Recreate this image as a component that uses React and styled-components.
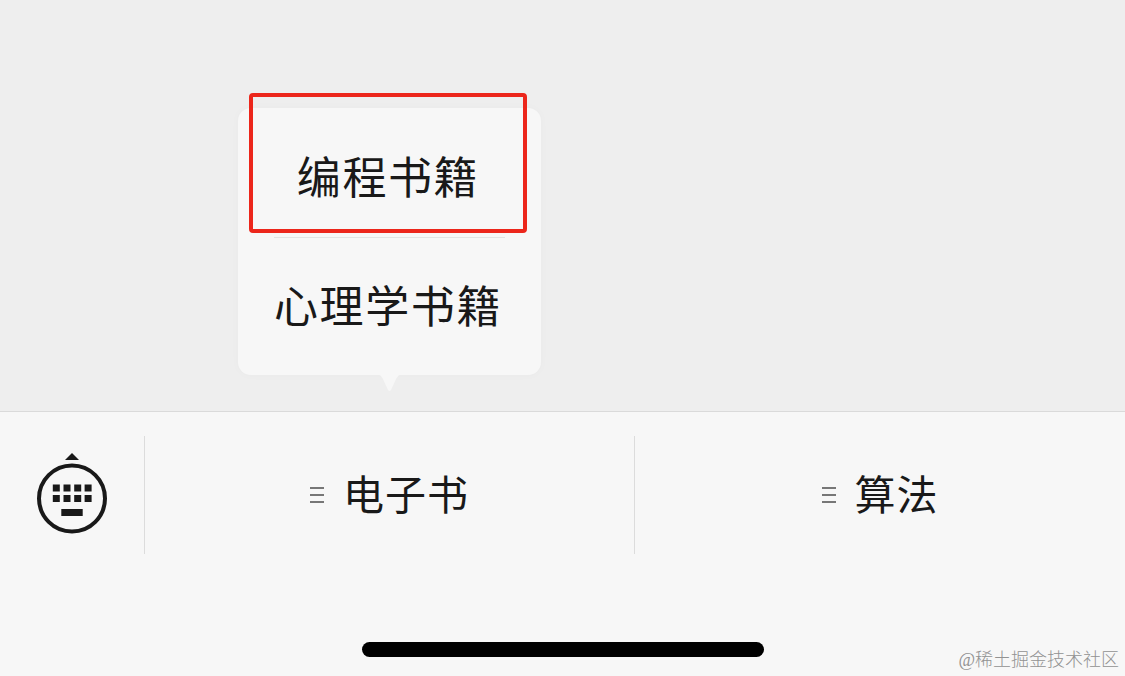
import React from 'react';
import styled, { createGlobalStyle } from 'styled-components';

const GlobalStyle = createGlobalStyle`
  * {
    box-sizing: border-box;
  }
  body {
    margin: 0;
    background: #f7f7f7;
    color: #191919;
    font-family: 'Noto Sans CJK SC', sans-serif;
  }
`;

const Page = styled.div`
  display: flex;
  flex-direction: column;
  position: relative;
  height: 676px;
  overflow: hidden;
`;

const ChatArea = styled.main`
  height: 412px;
  padding: 108px 0 0 238px;
  background: #eee;
  border-bottom: 1px solid #dadada;
`;

const Popover = styled.div`
  position: relative;
  width: 303px;
  height: 267px;
  padding-top: 2px;
  background: #f7f7f7;
  border-radius: 13px;
  box-shadow: 0 0 10px rgba(0, 0, 0, 0.025);
`;

const PopoverArrow = styled.svg`
  position: absolute;
  top: 266px;
  left: 140px;
`;

const PopoverItem = styled.div`
  display: flex;
  align-items: center;
  justify-content: center;
  height: 129px;
  padding-right: 3px;
  font-size: 44px;
  line-height: 1;
  letter-spacing: 1.6px;
  white-space: nowrap;
  & + & {
    position: relative;
  }
  & + &::before {
    content: '';
    position: absolute;
    top: -2px;
    left: 36px;
    width: 231px;
    height: 1px;
    background: #e2e4e3;
  }
`;

const Highlight = styled.div`
  position: absolute;
  top: -15px;
  left: 11px;
  width: 278px;
  height: 140px;
  border: 4px solid #ec261b;
  border-radius: 4px;
`;

const MenuBar = styled.nav`
  display: flex;
  height: 118px;
  margin-top: 24px;
`;

const KeyboardButton = styled.div`
  display: flex;
  align-items: flex-start;
  width: 144px;
  padding: 14px 0 0 34px;
`;

const MenuItem = styled.div`
  display: flex;
  flex: 1;
  align-items: center;
  justify-content: center;
  gap: 19px;
  border-left: 1px solid #dcdcdc;
  font-size: 41px;
  line-height: 1;
  letter-spacing: 1px;
  &:nth-child(2) {
    flex: 0 0 490px;
  }
`;

const MenuLabel = styled.span`
  padding-bottom: 5px;
`;

const MenuIcon = styled.svg`
  flex: none;
`;

const HomeIndicator = styled.div`
  width: 402px;
  height: 15px;
  margin: 88px auto 0;
  border-radius: 8px;
  background: #000;
`;

const Watermark = styled.div`
  position: absolute;
  right: 6px;
  bottom: 4px;
  color: #929292;
  font-family: 'Liberation Serif', 'Noto Sans CJK SC', serif;
  font-size: 18px;
  font-weight: 300;
  line-height: 24px;
`;

const popoverItems = ['编程书籍', '心理学书籍'];
const menuItems = ['电子书', '算法'];

const KeyboardIcon = () => (
  <svg width="76" height="86" viewBox="34 450 76 86" fill="#191919">
    <path d="M65 460L72 453L79 460Z" />
    <circle cx="72" cy="498.5" r="33" fill="none" stroke="#191919" strokeWidth="4" />
    {[52.8, 63.5, 74.2, 84.6].map(x => (
      <React.Fragment key={x}>
        <rect x={x} y="484.5" width="7" height="7" />
        <rect x={x} y="495" width="7" height="7" />
      </React.Fragment>
    ))}
    <rect x="61.3" y="509" width="21.4" height="7" />
  </svg>
);

const App = () => {
  return (
    <>
      <GlobalStyle />
      <Page>
        <ChatArea>
          <Popover>
            {popoverItems.map(item => (
              <PopoverItem key={item}>{item}</PopoverItem>
            ))}
            <PopoverArrow width="23" height="18" viewBox="0 0 23 18">
              <path d="M0 0H23Q20 1 18 5L13 16Q11.5 18 10 16L5 5Q3 1 0 0Z" fill="#f7f7f7" />
            </PopoverArrow>
            <Highlight />
          </Popover>
        </ChatArea>
        <MenuBar>
          <KeyboardButton>
            <KeyboardIcon />
          </KeyboardButton>
          {menuItems.map(item => (
            <MenuItem key={item}>
              <MenuIcon width="14" height="18" viewBox="0 0 14 18">
                <path d="M0 2H14M0 9H14M0 16H14" stroke="#777" strokeWidth="2" />
              </MenuIcon>
              <MenuLabel>{item}</MenuLabel>
            </MenuItem>
          ))}
        </MenuBar>
        <HomeIndicator />
        <Watermark>@稀土掘金技术社区</Watermark>
      </Page>
    </>
  );
};

export default App;
